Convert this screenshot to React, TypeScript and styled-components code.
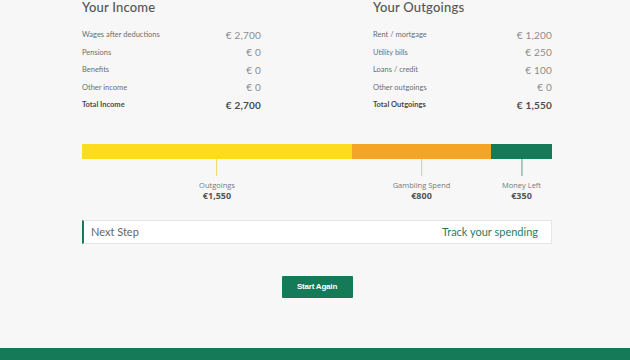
import React from "react";
import styled, { createGlobalStyle } from "styled-components";

const GlobalStyle = createGlobalStyle`
  html, body {
    margin: 0;
    padding: 0;
    background: #f7f7f7;
  }
  body {
    font-family: Lato, "Open Sans", sans-serif;
  }
`;

const GREEN = "#147a58";

const Page = styled.div`
  width: 630px;
  height: 360px;
  overflow: hidden;
  display: flex;
  flex-direction: column;
  background: #f7f7f7;
`;

const Main = styled.div`
  width: 470px;
  margin-left: 82px;
  padding-top: 1px;
  flex: 1;
`;

const Columns = styled.div`
  display: grid;
  grid-template-columns: 179px 179px;
  justify-content: space-between;
`;

const Heading = styled.h2`
  margin: 0;
  font-size: 13px;
  line-height: 13px;
  font-weight: 500;
  color: #555;
  letter-spacing: 0.2px;
`;

const Rows = styled.div`
  margin-top: 12px;
`;

const Row = styled.div<{ $total?: boolean }>`
  display: flex;
  justify-content: space-between;
  align-items: center;
  height: 17.5px;
  color: ${(p) => (p.$total ? "#4a4a4a" : "#6e6e6e")};
  font-weight: ${(p) => (p.$total ? 700 : 400)};
`;

const Label = styled.span`
  font-size: 7.5px;
`;

const Value = styled.span<{ $total?: boolean }>`
  font-size: 10px;
  letter-spacing: 0.2px;
  color: ${(p) => (p.$total ? "#4a4a4a" : "#8c8c8c")};
  font-weight: ${(p) => (p.$total ? 700 : 400)};
`;

const Bar = styled.div`
  display: flex;
  height: 15px;
  margin-top: 30px;
`;

const Segment = styled.div<{ $color: string }>`
  background: ${(p) => p.$color};
  position: relative;
`;

const Callout = styled.div`
  position: absolute;
  top: 15px;
  left: 50%;
  transform: translateX(-50%);
  display: flex;
  flex-direction: column;
  align-items: center;
  white-space: nowrap;
`;

const Tick = styled.div<{ $color: string }>`
  width: 1px;
  height: 17px;
  background: ${(p) => p.$color};
`;

const CalloutLabel = styled.div`
  margin-top: 4px;
  font-size: 7.5px;
  line-height: 10px;
  color: #777;
  font-family: "Open Sans", sans-serif;
`;

const CalloutValue = styled.div`
  font-size: 9px;
  line-height: 11px;
  font-weight: 700;
  color: #555;
  font-family: "Open Sans", sans-serif;
`;

const NextStep = styled.div`
  margin-top: 61px;
  height: 24px;
  box-sizing: border-box;
  background: #fff;
  border: 1px solid #e6e6e6;
  border-left: 2px solid ${GREEN};
  display: flex;
  align-items: center;
  justify-content: space-between;
  padding: 0 13px 0 7px;
  font-size: 11px;
`;

const StepTitle = styled.span`
  color: #666;
`;

const StepLink = styled.span`
  color: #2a7d5c;
`;

const ButtonRow = styled.div`
  display: flex;
  justify-content: center;
  margin-top: 32px;
`;

const Button = styled.button`
  width: 71px;
  height: 22px;
  border: none;
  border-radius: 1px;
  background: ${GREEN};
  color: #fff;
  font-family: "Liberation Sans", Arial, sans-serif;
  font-size: 8px;
  font-weight: 700;
  letter-spacing: -0.2px;
  cursor: pointer;
`;

const Footer = styled.div`
  height: 12px;
  background: ${GREEN};
`;

const income = [
  ["Wages after deductions", "€ 2,700"],
  ["Pensions", "€ 0"],
  ["Benefits", "€ 0"],
  ["Other income", "€ 0"],
];

const outgoings = [
  ["Rent / mortgage", "€ 1,200"],
  ["Utility bills", "€ 250"],
  ["Loans / credit", "€ 100"],
  ["Other outgoings", "€ 0"],
];

const segments = [
  { width: 270, color: "#fddc1f", tick: "#f5d66a", label: "Outgoings", value: "€1,550" },
  { width: 139, color: "#f4a525", tick: "#f2c27a", label: "Gambling Spend", value: "€800" },
  { width: 61, color: "#147a58", tick: "#5a9a85", label: "Money Left", value: "€350" },
];

function Table({ title, rows, total }: { title: string; rows: string[][]; total: string[] }) {
  return (
    <div>
      <Heading>{title}</Heading>
      <Rows>
        {rows.map(([l, v]) => (
          <Row key={l}>
            <Label>{l}</Label>
            <Value>{v}</Value>
          </Row>
        ))}
        <Row $total>
          <Label>{total[0]}</Label>
          <Value $total>{total[1]}</Value>
        </Row>
      </Rows>
    </div>
  );
}

export default function App() {
  return (
    <Page>
      <GlobalStyle />
      <Main>
        <Columns>
          <Table title="Your Income" rows={income} total={["Total Income", "€ 2,700"]} />
          <Table title="Your Outgoings" rows={outgoings} total={["Total Outgoings", "€ 1,550"]} />
        </Columns>
        <Bar>
          {segments.map((s) => (
            <Segment key={s.label} $color={s.color} style={{ width: s.width }}>
              <Callout>
                <Tick $color={s.tick} />
                <CalloutLabel>{s.label}</CalloutLabel>
                <CalloutValue>{s.value}</CalloutValue>
              </Callout>
            </Segment>
          ))}
        </Bar>
        <NextStep>
          <StepTitle>Next Step</StepTitle>
          <StepLink>Track your spending</StepLink>
        </NextStep>
        <ButtonRow>
          <Button>Start Again</Button>
        </ButtonRow>
      </Main>
      <Footer />
    </Page>
  );
}
